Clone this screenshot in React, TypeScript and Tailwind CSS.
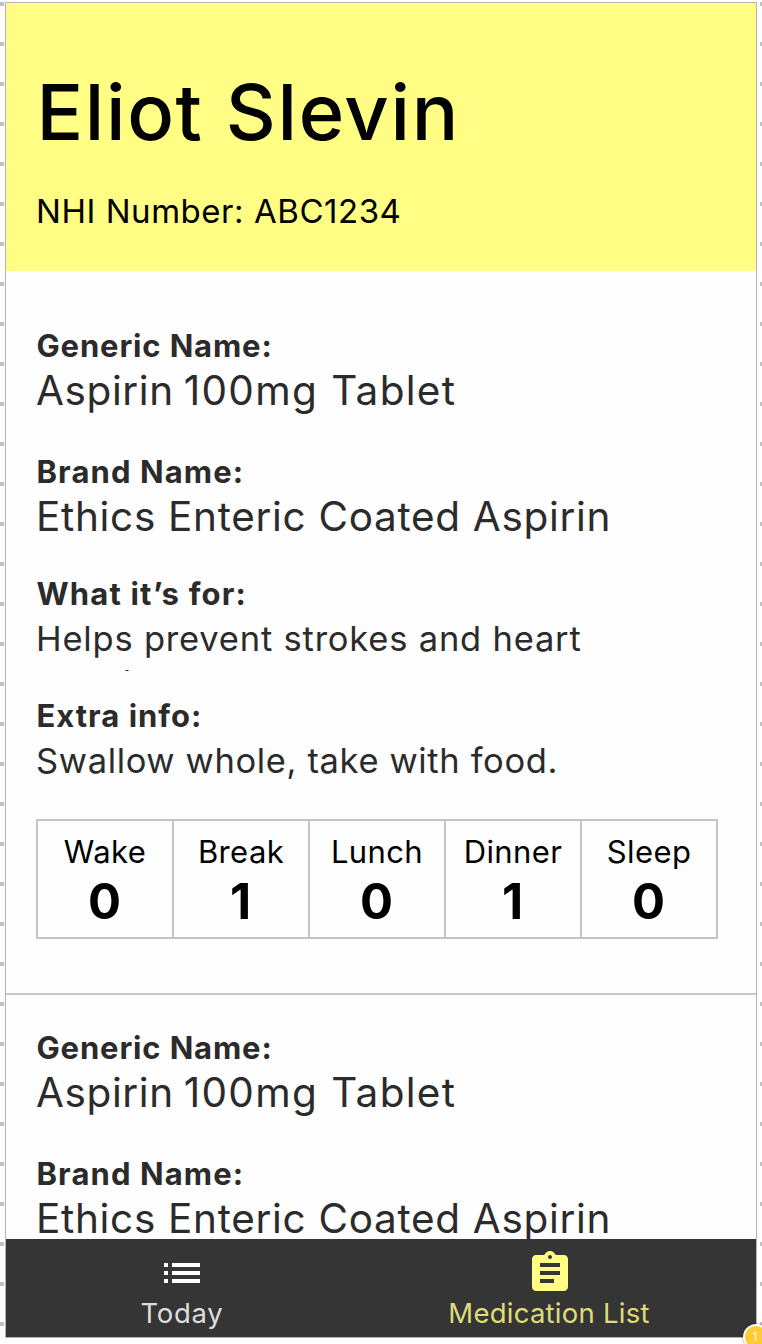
import type { ReactNode } from 'react';
import { MdAssignment, MdList } from 'react-icons/md';

const doses = [['Wake', 0], ['Break', 1], ['Lunch', 0], ['Dinner', 1], ['Sleep', 0]] as const;

function Ticks({ width, side }: { width: string; side: string }) {
  return (
    <div className={`flex w-[5px] shrink-0 ${side}`}>
      <div className={`h-full ${width} bg-[repeating-linear-gradient(to_bottom,transparent_0,transparent_2px,#c5c1c2_2px,#c5c1c2_6px,transparent_6px,transparent_40px)]`} />
    </div>
  );
}

function Label({ tracking, children }: { tracking: string; children: ReactNode }) {
  return <h2 className={`pl-[0.5px] text-[31px] leading-[40px] font-bold ${tracking}`}>{children}</h2>;
}

function Names() {
  return (
    <>
      <Label tracking="tracking-[0.85px]">Generic Name:</Label>
      <p className="h-[86px] text-[40.5px] leading-[50px] tracking-[0.6px]">
        Aspirin <span className="-ml-[2px] tracking-[1.3px]">100mg</span> <span className="ml-px tracking-[1.3px]">Tablet</span>
      </p>
      <Label tracking="tracking-[1.1px]">Brand Name:</Label>
      <p className="h-[82px] text-[40.5px] leading-[50px] tracking-[0.68px]">Ethics Enteric Coated Aspirin</p>
    </>
  );
}

export default function App() {
  return (
    <div className="relative flex h-[1344px] w-[762px] overflow-hidden bg-white font-['Inter',sans-serif] whitespace-nowrap">
      <Ticks width="w-1" side="justify-start" />
      <main className="mt-[2px] flex h-[1336px] w-[752px] flex-col border border-[#b8b2b6] bg-[#fefefe] text-[#2b2b2b]">
        <header className="h-[268px] shrink-0 bg-[#fffd84] pl-[30px] text-black">
          <h1 className="pt-[60px] pl-[0.5px] text-[77.5px] leading-[98px] font-medium tracking-[1.62px]">Eliot Slevin</h1>
          <p className="pt-[29px] text-[33px] leading-[42px] tracking-[0.54px]">NHI Number: ABC1234</p>
        </header>
        <div className="min-h-0 flex-1 overflow-hidden">
          <section className="h-[724px] border-b-2 border-[#c8c8c8] pt-[55px] pl-[30px]">
            <Names />
            <Label tracking="tracking-[1.17px]">What it’s for:</Label>
            <div className="h-[82px]">
              <p className="h-[57px] w-[620px] overflow-hidden pt-[3px] text-[34.5px] leading-[44px] tracking-[0.8px] whitespace-normal">
                Helps prevent strokes and heart <span className="tracking-[1.3px]">attacks.</span>
              </p>
            </div>
            <Label tracking="tracking-[1px]">Extra info:</Label>
            <p className="h-[83px] text-[34.5px] leading-[50px] tracking-[0.64px]">Swallow whole, take with food.</p>
            <div className="grid h-[120px] w-[682px] grid-cols-[136px_136px_136px_136px_134px] border-2 border-[#c4c4c4] text-center text-black">
              {doses.map(([name, n]) => (
                <div key={name} className="border-r-2 border-[#c4c4c4] pt-[11px] last:border-r-0">
                  <div className="text-[31px] leading-[40px] tracking-[0.4px]">{name}</div>
                  <div className="pr-px text-[49px] leading-[60px] font-bold">{n}</div>
                </div>
              ))}
            </div>
          </section>
          <section className="pt-[33px] pl-[30px]"><Names /></section>
        </div>
        <nav className="grid h-[98px] shrink-0 grid-cols-[352px_384px] bg-[#353535] pt-[10px] text-[27.5px] leading-[32px]">
          <div className="flex flex-col items-center text-white">
            <MdList size={48} />
            <span className="tracking-[0.7px] text-[#dedede]">Today</span>
          </div>
          <div className="flex flex-col items-center text-[#fffd84]">
            <MdAssignment size={48} />
            <span className="pr-[2px] tracking-[0.25px] text-[#dfdd77]">Medication List</span>
          </div>
        </nav>
      </main>
      <Ticks width="w-[2px]" side="justify-end" />
      <div className="absolute top-[1324px] left-[743px] flex h-[26px] w-[26px] items-center justify-center rounded-full border-2 border-white bg-[#ffcb33] pr-[2px] text-[12px] leading-none text-white shadow-[0_0_1px_1px_rgba(0,0,0,0.2)]">1</div>
    </div>
  );
}
